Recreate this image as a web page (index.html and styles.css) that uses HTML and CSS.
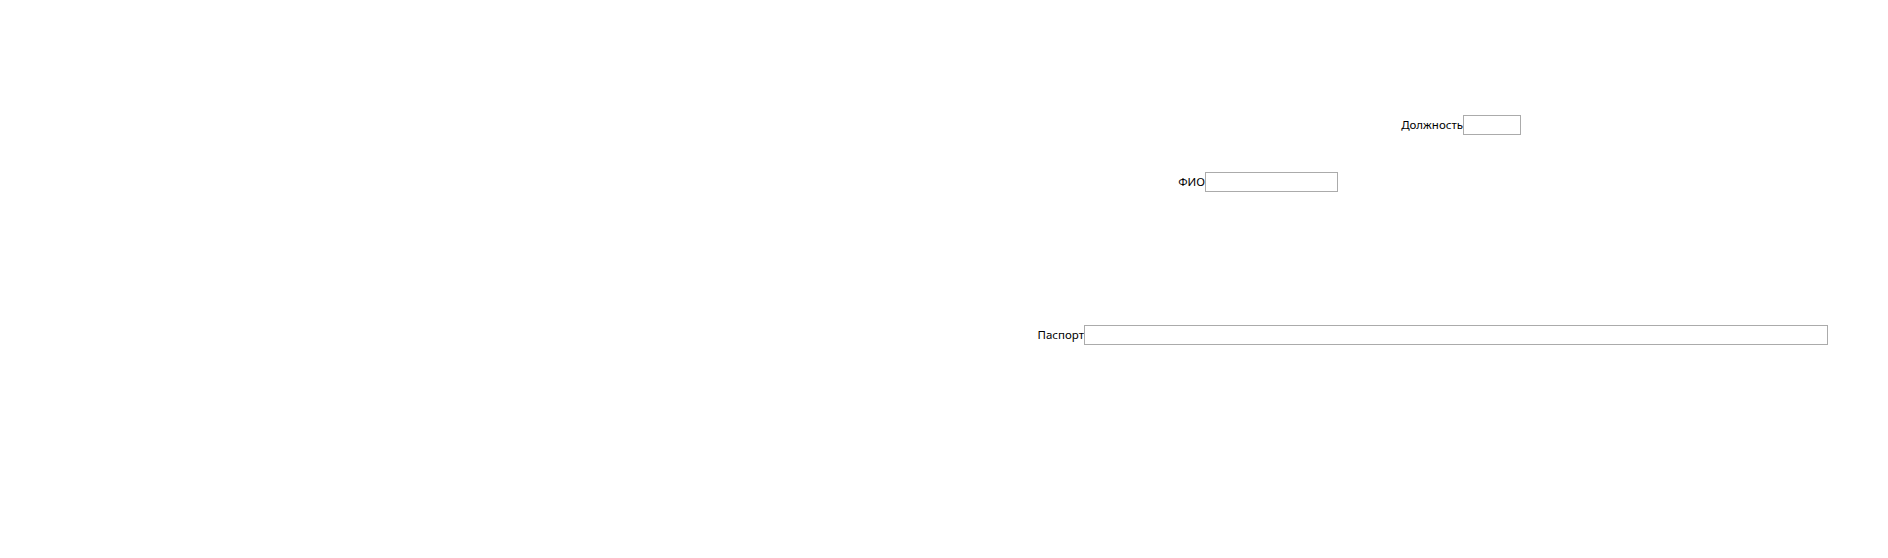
FILE: index.html
```html
<!DOCTYPE html>
<html lang="ru">
<head>
<meta charset="utf-8">
<title>Форма</title>
<link rel="stylesheet" href="styles.css">
</head>
<body>
<div class="form">
  <div class="row row-position">
    <label class="label label-position" for="position">Должность</label>
    <input class="field field-position" id="position" type="text">
  </div>
  <div class="row row-name">
    <label class="label label-name" for="name">ФИО</label>
    <input class="field field-name" id="name" type="text">
  </div>
  <div class="row row-passport">
    <label class="label label-passport" for="passport">Паспорт</label>
    <input class="field field-passport" id="passport" type="text">
  </div>
</div>
</body>
</html>
```

FILE: styles.css
```css
html, body {
  margin: 0;
  padding: 0;
  background: #ffffff;
}

body {
  width: 1888px;
  height: 558px;
  overflow: hidden;
  font-family: "Segoe UI", "Noto Sans", "Open Sans", sans-serif;
  font-size: 11.5px;
  color: #000000;
}

.form {
  display: flex;
  flex-direction: column;
}

.row {
  display: flex;
  align-items: center;
  height: 20px;
}

.row-position {
  margin-top: 115px;
  padding-left: 1383px;
}

.row-name {
  margin-top: 37px;
  padding-left: 1155px;
}

.row-passport {
  margin-top: 133px;
  padding-left: 1004px;
}

.label {
  width: 80px;
  text-align: right;
  white-space: nowrap;
  line-height: 20px;
}

.label-name {
  width: 50px;
}

.field {
  box-sizing: border-box;
  height: 20px;
  margin: 0;
  padding: 0 2px;
  border: 1px solid #ababab;
  background: #ffffff;
  outline: none;
  font: inherit;
}

.field-position {
  width: 58px;
}

.field-name {
  width: 133px;
}

.field-passport {
  width: 744px;
}
```
